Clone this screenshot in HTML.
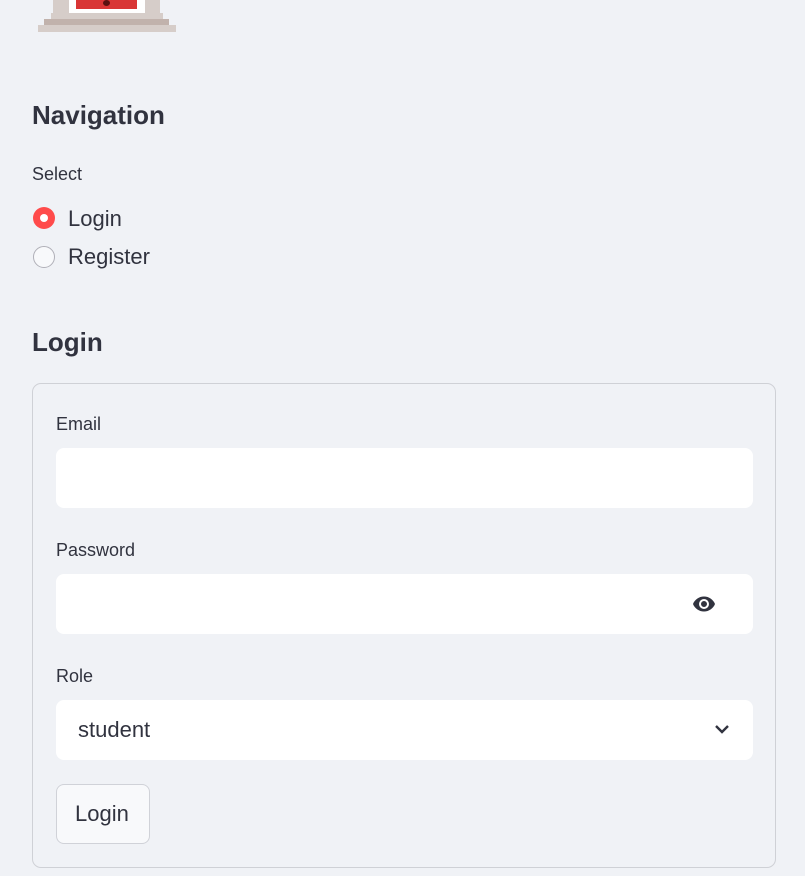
<!DOCTYPE html>
<html><head><meta charset="utf-8"><style>
body{margin:0;background:#f0f2f6;font-family:"Source Sans Pro","Liberation Sans",sans-serif;color:#31333f;width:805px;height:876px;overflow:hidden;position:relative}
.a{position:absolute}
h2{position:absolute;margin:0;font-size:26px;font-weight:600;color:#31333f}
.lbl{position:absolute;font-size:18px;color:#31333f}
.inp{position:absolute;left:56px;width:697px;height:60px;background:#fff;border-radius:8px}
</style></head><body>
<div class="a" style="left:53px;top:0;width:107px;height:14px;background:#d6cdc9"></div>
<div class="a" style="left:69px;top:0;width:76px;height:13px;background:#fff"></div>
<div class="a" style="left:76px;top:0;width:61px;height:9px;background:#d93535"></div>
<div class="a" style="left:103px;top:0;width:7px;height:6px;border-radius:50%;background:#5a1010"></div>
<div class="a" style="left:51px;top:13px;width:112px;height:6px;background:#d6cdc9"></div>
<div class="a" style="left:44px;top:19px;width:125px;height:6px;background:#c1b2ac"></div>
<div class="a" style="left:38px;top:25px;width:138px;height:7px;background:#d6cdc9"></div>

<h2 style="left:32px;top:100px">Navigation</h2>
<div class="lbl" style="left:32px;top:164px">Select</div>
<div class="a" style="left:33px;top:207px;width:22px;height:22px;border-radius:50%;background:#ff4b4b"></div>
<div class="a" style="left:40px;top:214px;width:8px;height:8px;border-radius:50%;background:#fff"></div>
<div class="a" style="left:68px;top:206px;font-size:22px">Login</div>
<div class="a" style="left:33px;top:246px;width:20px;height:20px;border-radius:50%;border:1px solid #b0b0b8;background:#f8f9fb"></div>
<div class="a" style="left:68px;top:244px;font-size:22px">Register</div>

<h2 style="left:32px;top:327px">Login</h2>
<div class="a" style="left:32px;top:383px;width:742px;height:483px;border:1px solid #cfd1d6;border-radius:9px"></div>
<div class="lbl" style="left:56px;top:414px">Email</div>
<div class="inp" style="top:448px"></div>
<div class="lbl" style="left:56px;top:540px">Password</div>
<div class="inp" style="top:574px"></div>
<svg class="a" style="left:689px;top:592px" width="30" height="24" viewBox="0 0 24 24"><path fill="#31333f" d="M12 4.5C7 4.5 2.7 7.6 1 12c1.7 4.4 6 7.5 11 7.5s9.3-3.1 11-7.5c-1.7-4.4-6-7.5-11-7.5zm0 12.5a5 5 0 110-10 5 5 0 010 10zm0-8a3 3 0 100 6 3 3 0 000-6z"/></svg>
<div class="lbl" style="left:56px;top:666px">Role</div>
<div class="inp" style="top:700px"></div>
<div class="a" style="left:78px;top:717px;font-size:22px">student</div>
<svg class="a" style="left:712px;top:722px" width="20" height="16" viewBox="0 0 20 16"><path d="M4 4l6 6 6-6" fill="none" stroke="#31333f" stroke-width="2.4"/></svg>
<div class="a" style="left:56px;top:784px;width:92px;height:58px;border:1px solid #d0d2d8;border-radius:8px;background:#f8f9fb"></div>
<div class="a" style="left:75px;top:801px;font-size:22px">Login</div>
</body></html>
